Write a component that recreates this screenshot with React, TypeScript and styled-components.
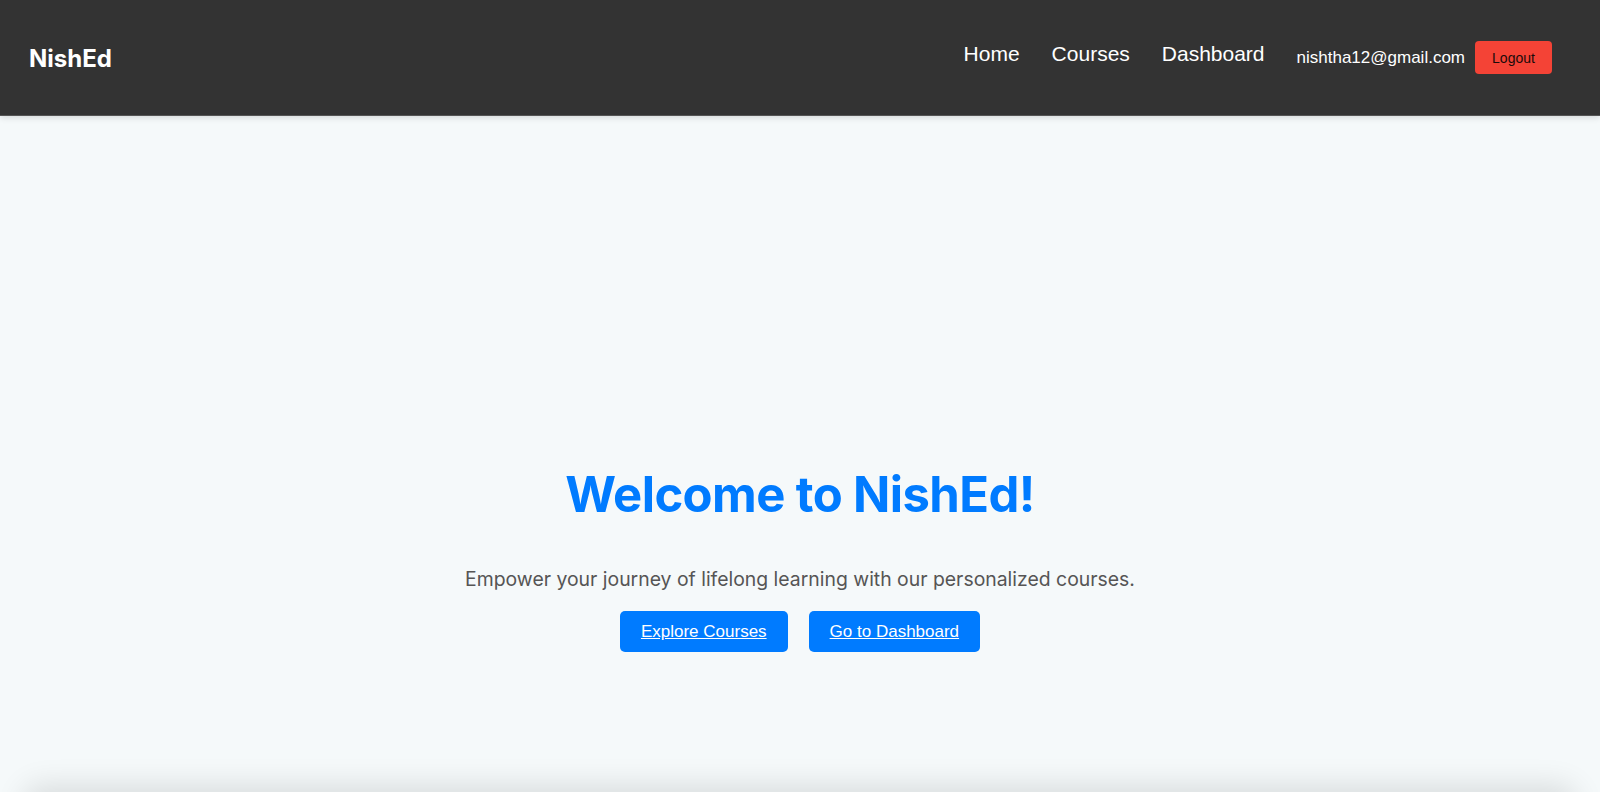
import React from 'react';
import styled, { createGlobalStyle } from 'styled-components';

const GlobalStyle = createGlobalStyle`
  body {
    margin: 0;
    background: #f5f9fa;
    font-family: Inter, "Liberation Sans", sans-serif;
  }
`;

const navLinks = ['Home', 'Courses', 'Dashboard'];

const App: React.FC = () => (
  <>
    <GlobalStyle />
    <Navbar>
      <Logo>NishEd</Logo>
      <NavRight>
        {navLinks.map((l) => (
          <NavLink key={l} href='#'>{l}</NavLink>
        ))}
        <UserEmail>nishtha12@gmail.com</UserEmail>
        <LogoutButton>Logout</LogoutButton>
      </NavRight>
    </Navbar>
    <Hero>
      <Title>Welcome to NishEd!</Title>
      <Subtitle>
        Empower your journey of lifelong learning with our personalized courses.
      </Subtitle>
      <Actions>
        <ActionButton href='#'>Explore Courses</ActionButton>
        <ActionButton href='#'>Go to Dashboard</ActionButton>
      </Actions>
    </Hero>
    <Footer />
  </>
);
export default App;

const Navbar = styled.nav`
  display: flex;
  justify-content: space-between;
  align-items: center;
  height: 116px;
  padding: 0 48px 0 29px;
  background: #333;
  box-shadow: 0 2px 6px rgba(0, 0, 0, 0.12);
  border-bottom: 1px solid #555;
  box-sizing: border-box;
  position: relative;
  z-index: 1;
`;

const Logo = styled.div`
  color: #fff;
  font-family: Inter, sans-serif;
  font-weight: 700;
  font-size: 24px;
  padding-top: 2px;
`;

const NavRight = styled.div`
  display: flex;
  align-items: center;
`;

const NavLink = styled.a`
  color: #fff;
  text-decoration: none;
  font-family: "Liberation Sans", Arial, sans-serif;
  font-size: 21px;
  margin-right: 32px;
  padding-bottom: 8px;
`;

const UserEmail = styled.span`
  color: #fff;
  font-family: "Liberation Sans", Arial, sans-serif;
  font-size: 17px;
  margin-right: 10px;
`;

const LogoutButton = styled.button`
  width: 77px;
  height: 33px;
  border: none;
  border-radius: 4px;
  background: #f44336;
  color: #1a0a0a;
  font-family: "Liberation Sans", Arial, sans-serif;
  font-size: 14px;
  cursor: pointer;
`;

const Hero = styled.section`
  display: flex;
  flex-direction: column;
  align-items: center;
  height: 676px;
  box-sizing: border-box;
  padding-top: 350px;
  text-align: center;
`;

const Title = styled.h1`
  margin: 0;
  color: #007bff;
  font-family: Inter, sans-serif;
  font-weight: 700;
  font-size: 49px;
  line-height: 58px;
  letter-spacing: -0.6px;
`;

const Subtitle = styled.p`
  margin: 42px 0 0;
  color: #555;
  font-family: Inter, sans-serif;
  font-size: 19.4px;
  line-height: 27px;
`;

const Actions = styled.div`
  display: flex;
  gap: 21px;
  margin-top: 18px;
`;

const ActionButton = styled.a`
  display: inline-flex;
  align-items: center;
  height: 41px;
  padding: 0 21px;
  border-radius: 5px;
  background: #007bff;
  color: #fff;
  font-family: "Liberation Sans", Arial, sans-serif;
  font-size: 17px;
  text-decoration: underline;
`;

const Footer = styled.footer`
  height: 200px;
  margin: 0 24px;
  border-radius: 16px;
  background: #f5f9fa;
  box-shadow: 0 -6px 30px rgba(0, 0, 0, 0.12);
`;
